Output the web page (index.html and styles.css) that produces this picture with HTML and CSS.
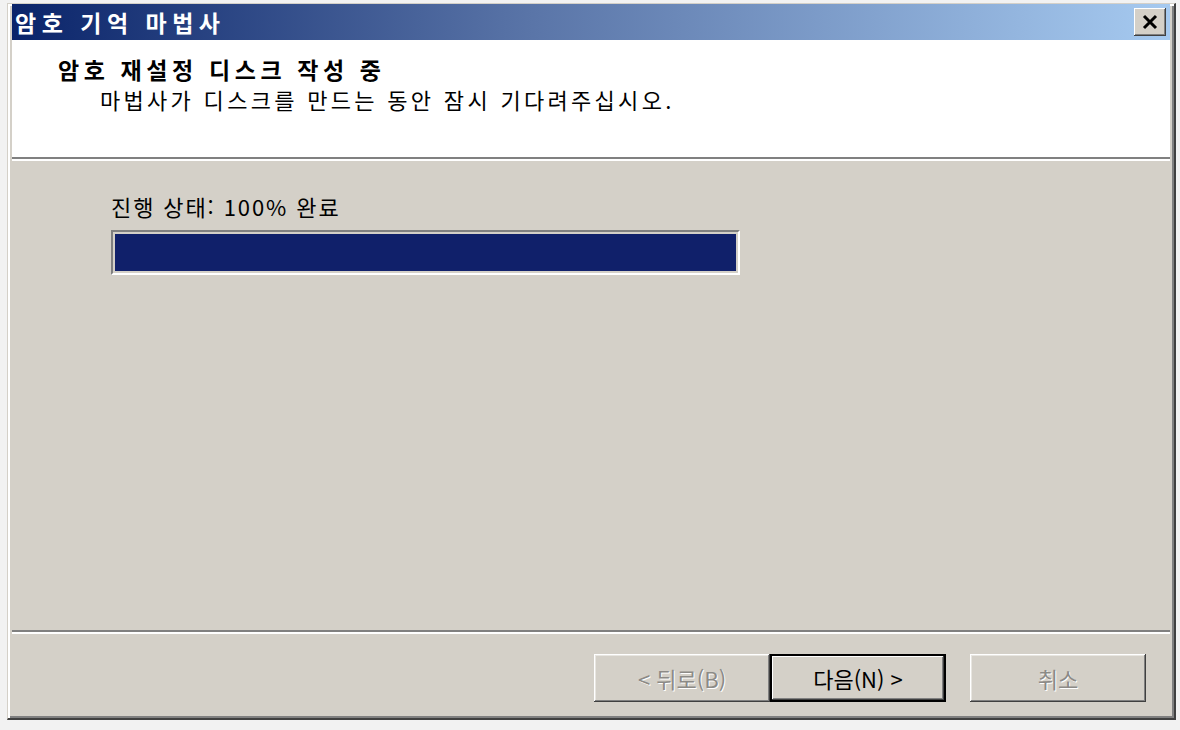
FILE: index.html
```html
<!DOCTYPE html>
<html lang="ko">
<head>
    <meta charset="UTF-8">
    <title>암호 기억 마법사</title>
    <link rel="stylesheet" href="styles.css">
</head>
<body>
    <div class="window">
        <div class="titlebar">
            <span class="title">암호 기억 마법사</span>
            <button class="close" type="button">
                <svg width="18" height="16" viewBox="0 0 18 16">
                    <path d="M3 2 L15 14 M15 2 L3 14" stroke="#000" stroke-width="3"/>
                </svg>
            </button>
        </div>
        <div class="header">
            <div class="heading">암호 재설정 디스크 작성 중</div>
            <div class="subheading">마법사가 디스크를 만드는 동안 잠시 기다려주십시오.</div>
        </div>
        <div class="body">
            <div class="progress-label">진행 상태: 100% 완료</div>
            <div class="progress">
                <div class="progress-fill" style="width: 100%"></div>
            </div>
        </div>
        <div class="footer">
            <button class="btn disabled" type="button">&lt; 뒤로(B)</button>
            <button class="btn default" type="button">다음(N) &gt;</button>
            <button class="btn disabled cancel" type="button">취소</button>
        </div>
    </div>
</body>
</html>
```

FILE: styles.css
```css
body {
    margin: 0;
    background-color: #f2f2f2;
    font-family: "Noto Sans CJK KR", "Liberation Sans", sans-serif;
    color: #000;
}
.window {
    margin: 3px 0 0 7px;
    width: 1158px;
    height: 714px;
    background-color: #d4d0c8;
    border-top: 1px solid #d4d0c8;
    border-left: 1px solid #d4d0c8;
    border-right: 2px solid #404040;
    border-bottom: 2px solid #404040;
    box-shadow: inset 2px 2px 0 #fff, inset -2px -2px 0 #808080;
    padding: 0 4px 0 4px;
    display: flex;
    flex-direction: column;
}
.titlebar {
    height: 36px;
    background: linear-gradient(to right, #0a246a 0%, #5a75a8 45%, #a6caf0 100%);
    display: flex;
    align-items: center;
    justify-content: space-between;
    padding: 0 4px 0 3px;
}
.title {
    color: #fff;
    font-weight: bold;
    font-size: 23px;
    letter-spacing: 5.5px;
    line-height: 1;
}
.close {
    width: 32px;
    height: 28px;
    padding: 0;
    margin: 0;
    background-color: #d4d0c8;
    border: none;
    box-shadow: inset -1px -1px 0 #404040, inset 1px 1px 0 #fff, inset -2px -2px 0 #808080;
    display: flex;
    align-items: center;
    justify-content: center;
}
.header {
    height: 119px;
    background-color: #fff;
    border-bottom: 2px solid #808080;
    box-shadow: 0 2px 0 #fff;
    padding: 14px 0 0 46px;
    box-sizing: border-box;
}
.heading {
    font-weight: bold;
    font-size: 23px;
    letter-spacing: 4.6px;
    line-height: 30px;
}
.subheading {
    font-size: 22px;
    letter-spacing: 3.3px;
    line-height: 30px;
    padding-left: 42px;
}
.body {
    flex: 1;
    padding: 32px 0 0 99px;
    border-bottom: 2px solid #808080;
    box-shadow: 0 2px 0 #fff;
}
.progress-label {
    font-size: 22px;
    letter-spacing: 1.9px;
    line-height: 30px;
}
.progress {
    margin-top: 9px;
    width: 621px;
    height: 37px;
    border: 2px solid;
    border-color: #808080 #fff #fff #808080;
    padding: 2px;
}
.progress-fill {
    height: 100%;
    background-color: #10206a;
}
.footer {
    height: 86px;
    display: flex;
    align-items: flex-start;
    justify-content: flex-end;
    padding: 22px 24px 0 0;
    box-sizing: border-box;
}
.btn {
    width: 176px;
    height: 48px;
    margin: 0;
    font-family: inherit;
    font-size: 22px;
    background-color: #d4d0c8;
    border: none;
    box-shadow: inset -1px -1px 0 #404040, inset 1px 1px 0 #fff, inset -2px -2px 0 #808080, inset 2px 2px 0 #e8e6e1;
    color: #000;
}
.btn.disabled {
    color: #8c8a86;
    text-shadow: 1px 1px 0 #fff;
}
.btn.default {
    box-shadow: inset 0 0 0 2px #000, inset -3px -3px 0 #404040, inset 3px 3px 0 #fff, inset -4px -4px 0 #808080;
}
.btn.cancel {
    margin-left: 24px;
}
```
